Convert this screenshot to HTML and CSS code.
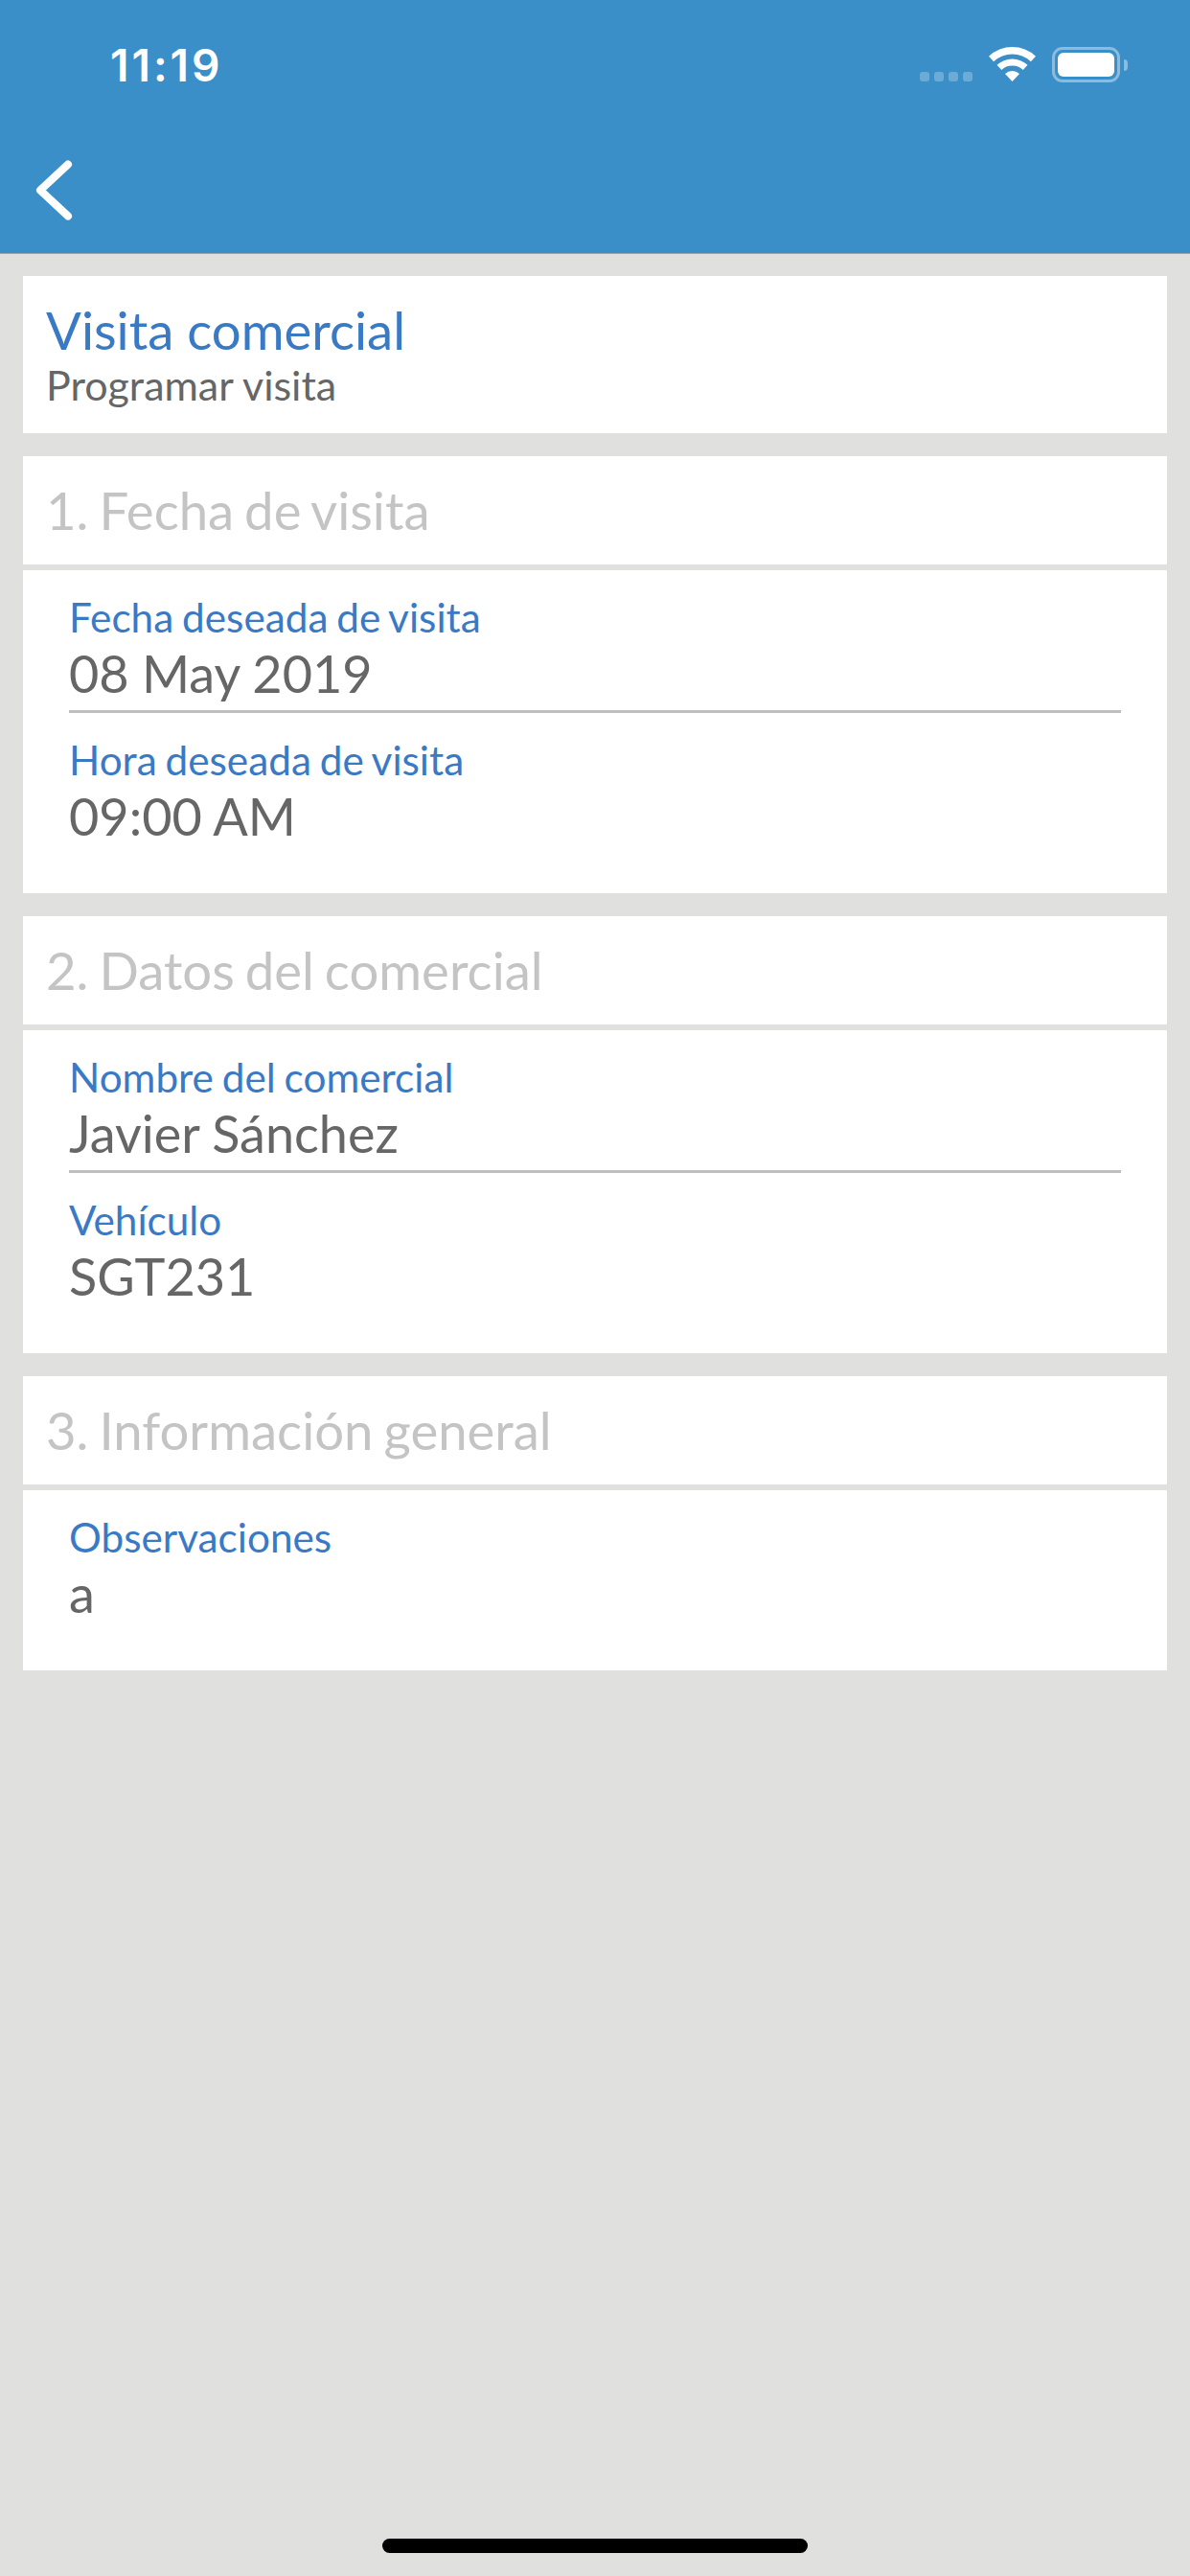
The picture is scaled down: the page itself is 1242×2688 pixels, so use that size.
FILE: index.html
```html
<!DOCTYPE html>
<html lang="es">
<head>
<meta charset="utf-8">
<title>Visita comercial</title>
<link rel="stylesheet" href="styles.css">
</head>
<body>
<header class="app-header">
  <div class="status-bar">
    <span class="clock">11:19</span>
    <div class="status-icons">
      <div class="signal-dots"><i></i><i></i><i></i><i></i></div>
      <svg class="wifi" viewBox="0 0 49 36" width="49" height="36" aria-hidden="true">
        <path fill="#fff" d="M0 9.7A36 36 0 0 1 49 9.7L43.9 15.2A28.5 28.5 0 0 0 5.1 15.2Z"/>
        <path fill="#fff" d="M8.5 18.8A23.5 23.5 0 0 1 40.5 18.8L35.75 23.9A16.5 16.5 0 0 0 13.25 23.9Z"/>
        <path fill="#fff" d="M17 28A11 11 0 0 1 32 28L24.5 36Z"/>
      </svg>
      <div class="battery"><div class="battery-body"><div class="battery-fill"></div></div><div class="battery-cap"></div></div>
    </div>
  </div>
  <div class="nav-bar">
    <svg class="back" viewBox="0 0 44 64" width="44" height="64" aria-hidden="true">
      <path d="M36 5.5L7 32.5L36 59.5" fill="none" stroke="#fff" stroke-width="8" stroke-linecap="round" stroke-linejoin="round"/>
    </svg>
  </div>
</header>
<main class="content">
  <section class="card intro">
    <h1 class="intro-title">Visita comercial</h1>
    <p class="intro-sub">Programar visita</p>
  </section>

  <section class="group">
    <h2 class="card group-title">1. Fecha de visita</h2>
    <div class="card group-body">
      <div class="field field-ruled">
        <div class="field-label">Fecha deseada de visita</div>
        <div class="field-value">08 May 2019</div>
      </div>
      <div class="field field-last">
        <div class="field-label">Hora deseada de visita</div>
        <div class="field-value">09:00 AM</div>
      </div>
    </div>
  </section>

  <section class="group">
    <h2 class="card group-title">2. Datos del comercial</h2>
    <div class="card group-body">
      <div class="field field-ruled">
        <div class="field-label">Nombre del comercial</div>
        <div class="field-value">Javier Sánchez</div>
      </div>
      <div class="field field-last">
        <div class="field-label">Vehículo</div>
        <div class="field-value">SGT231</div>
      </div>
    </div>
  </section>

  <section class="group">
    <h2 class="card group-title">3. Información general</h2>
    <div class="card group-body">
      <div class="field field-last">
        <div class="field-label">Observaciones</div>
        <div class="field-value">a</div>
      </div>
    </div>
  </section>
</main>
<div class="home-indicator"></div>
</body>
</html>
```
FILE: styles.css
```css
* { box-sizing: border-box; }
html, body { margin: 0; padding: 0; }
body {
  width: 1242px;
  height: 2688px;
  display: flex;
  flex-direction: column;
  background: #e0e0de;
  font-family: "Lato", "Open Sans", sans-serif;
  overflow: hidden;
}
.app-header {
  height: 265px;
  background: #3b8fc9;
  border-bottom: 1px solid #9aa3a8;
  flex: none;
}
.status-bar {
  height: 120px;
  padding: 0 65px 0 115px;
  display: flex;
  justify-content: space-between;
}
.clock {
  font-family: "Inter", sans-serif;
  font-weight: 600;
  font-size: 46px;
  letter-spacing: 3px;
  line-height: 54px;
  margin-top: 41px;
  color: #fff;
}
.status-icons {
  display: flex;
  align-items: flex-start;
  padding-top: 49px;
}
.signal-dots {
  display: flex;
  gap: 5px;
  margin-top: 26px;
  margin-right: 17px;
}
.signal-dots i {
  width: 10px;
  height: 10px;
  border-radius: 3px;
  background: rgba(255, 255, 255, 0.25);
}
.wifi { margin-right: 17px; display: block; }
.battery { display: flex; align-items: center; height: 37px; }
.battery-body {
  width: 71px;
  height: 37px;
  border: 3px solid rgba(255, 255, 255, 0.4);
  border-radius: 11px;
  padding: 3px;
}
.battery-fill {
  width: 100%;
  height: 100%;
  background: #fff;
  border-radius: 6px;
}
.battery-cap {
  width: 4px;
  height: 12px;
  margin-left: 4px;
  background: rgba(255, 255, 255, 0.4);
  border-radius: 0 6px 6px 0;
}
.nav-bar {
  height: 144px;
  padding: 46px 0 0 35px;
}
.back { display: block; }
.content {
  flex: 1;
  padding: 23px 24px 0;
  display: flex;
  flex-direction: column;
  gap: 24px;
}
.card { background: #fff; margin: 0; }
.intro {
  height: 164px;
  padding: 26px 24px 0;
}
.intro-title {
  margin: 0;
  font-size: 54.5px;
  line-height: 60px;
  font-weight: 400;
  color: #3a7ac5;
}
.intro-sub {
  margin: 5px 0 0;
  font-size: 43px;
  line-height: 46px;
  color: #666;
}
.group { display: flex; flex-direction: column; gap: 6px; }
.group-title {
  height: 113px;
  padding: 26px 24px 0;
  font-size: 54.5px;
  line-height: 60px;
  font-weight: 400;
  word-spacing: -3px;
  color: #c4c4c4;
}
.group-body { padding: 0 48px; }
.field { padding-top: 26px; }
.field-ruled { padding-bottom: 8px; border-bottom: 3px solid #bfbfbf; }
.field-last { padding-bottom: 50px; }
.field-label {
  font-size: 42.3px;
  line-height: 46px;
  word-spacing: -2px;
  color: #3a7ac5;
}
.field-value {
  margin-top: 6px;
  font-size: 54px;
  line-height: 60px;
  word-spacing: -0.5px;
  color: #666;
}
.home-indicator {
  position: absolute;
  left: 399px;
  top: 2649px;
  width: 444px;
  height: 15px;
  border-radius: 8px;
  background: #000;
}
```
